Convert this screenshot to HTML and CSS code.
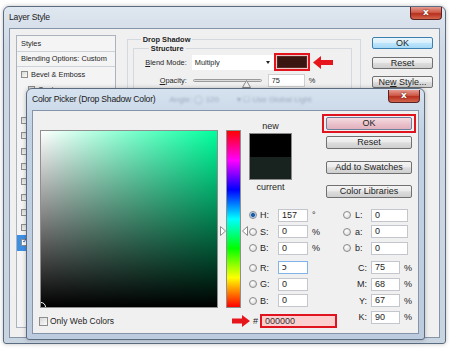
FILE: index.html
```html
<!DOCTYPE html>
<html lang="en">
<head>
  <meta charset="UTF-8">
  <title>Layer Style - Color Picker</title>
  <link rel="stylesheet" href="styles.css">
</head>
<body>
  <!-- Layer Style dialog (behind) -->
  <div class="win layer-style">
    <div class="titlebar">
      <span class="title">Layer Style</span>
      <span class="close">x</span>
    </div>
    <div class="client ls-client">
      <div class="styles-list">
        <div class="list-head">Styles</div>
        <div class="list-head">Blending Options: Custom</div>
        <div class="fx"><span class="cb"></span>Bevel &amp; Emboss</div>
        <div class="fx sub"><span class="cb"></span>Contour</div>
        <div class="fx sub"><span class="cb"></span>Texture</div>
        <div class="fx"><span class="cb"></span>Stroke</div>
        <div class="fx"><span class="cb"></span>Inner Shadow</div>
        <div class="fx"><span class="cb"></span>Inner Glow</div>
        <div class="fx"><span class="cb"></span>Satin</div>
        <div class="fx"><span class="cb"></span>Color Overlay</div>
        <div class="fx"><span class="cb"></span>Gradient Overlay</div>
        <div class="fx"><span class="cb"></span>Pattern Overlay</div>
        <div class="fx"><span class="cb"></span>Outer Glow</div>
        <div class="fx on"><span class="cb checked"></span>Drop Shadow</div>
      </div>

      <div class="settings">
        <fieldset class="group outer">
          <legend>Drop Shadow</legend>
          <fieldset class="group inner">
            <legend>Structure</legend>
            <div class="opt-row blend">
              <span class="opt-label"><u>B</u>lend Mode:</span>
              <span class="select">Multiply<span class="caret"></span></span>
              <span class="swatch"><span class="swatch-fill"></span></span>
              <svg class="red-arrow" width="20" height="13" viewBox="0 0 20 13">
                <polygon points="0,6.5 8,0 8,4 20,4 20,9 8,9 8,13" fill="#e8141c"/>
              </svg>
            </div>
            <div class="opt-row">
              <span class="opt-label"><u>O</u>pacity:</span>
              <span class="slider">
                <svg class="thumb" width="9" height="8" viewBox="0 0 9 8">
                  <polygon points="4.5,0.5 8.5,7.5 0.5,7.5" fill="#f4f4f4" stroke="#8a8a8a"/>
                </svg>
              </span>
              <span class="num">75</span>
              <span class="unit">%</span>
            </div>
          </fieldset>
        </fieldset>
      </div>

      <div class="side">
        <div class="btn default">OK</div>
        <div class="btn">Reset</div>
        <div class="btn">Ne<u>w</u> Style...</div>
      </div>
    </div>
  </div>

  <!-- Color Picker dialog (front) -->
  <div class="win picker">
    <div class="titlebar">
      <span class="title">Color Picker (Drop Shadow Color)</span>
      <span class="ghost g1">Angle: &#9711; 120</span>
      <span class="ghost g2">&#9662; &#9744; Use Global Light</span>
      <span class="close">x</span>
    </div>
    <div class="client pk-client">
      <div class="pk-left">
        <div class="field"><span class="marker"></span></div>
        <div class="web"><span class="cb"></span>Only Web Colors</div>
      </div>

      <div class="hue">
        <svg class="hue-arrow left" width="6" height="10" viewBox="0 0 6 10">
          <polygon points="0.5,0.5 5.5,5 0.5,9.5" fill="#fff" stroke="#8a8a8a"/>
        </svg>
        <svg class="hue-arrow right" width="6" height="10" viewBox="0 0 6 10">
          <polygon points="5.5,0.5 0.5,5 5.5,9.5" fill="#fff" stroke="#8a8a8a"/>
        </svg>
      </div>

      <div class="pk-right">
        <div class="pk-top">
          <div class="compare">
            <div class="cap">new</div>
            <div class="chip"><span class="chip-new"></span><span class="chip-cur"></span></div>
            <div class="cap">current</div>
          </div>
          <div class="pk-buttons">
            <div class="ok-frame"><div class="btn hot">OK</div></div>
            <div class="btn b-reset">Reset</div>
            <div class="btn b-add">Add to Swatches</div>
            <div class="btn b-libs">Color Libraries</div>
          </div>
        </div>

        <div class="fields">
          <div class="fcol hsb">
            <div class="frow"><span class="radio on"></span><span class="flabel">H:</span><span class="fin">157</span><span class="funit">°</span></div>
            <div class="frow"><span class="radio"></span><span class="flabel">S:</span><span class="fin">0</span><span class="funit">%</span></div>
            <div class="frow"><span class="radio"></span><span class="flabel">B:</span><span class="fin">0</span><span class="funit">%</span></div>
            <div class="fgap"></div>
            <div class="frow"><span class="radio"></span><span class="flabel">R:</span><span class="fin focus">כ</span></div>
            <div class="frow"><span class="radio"></span><span class="flabel">G:</span><span class="fin">0</span></div>
            <div class="frow"><span class="radio"></span><span class="flabel">B:</span><span class="fin">0</span></div>
            <div class="frow hex">
              <svg class="hex-arrow" width="18" height="12" viewBox="0 0 18 12">
                <polygon points="18,6 10,0 10,3.5 0,3.5 0,8.5 10,8.5 10,12" fill="#e8141c"/>
              </svg>
              <span class="hash">#</span>
              <span class="hexin">000000</span>
            </div>
          </div>
          <div class="fcol lab">
            <div class="frow"><span class="radio"></span><span class="flabel">L:</span><span class="fin">0</span></div>
            <div class="frow"><span class="radio"></span><span class="flabel">a:</span><span class="fin">0</span></div>
            <div class="frow"><span class="radio"></span><span class="flabel">b:</span><span class="fin">0</span></div>
            <div class="fgap"></div>
            <div class="frow cmyk"><span class="flabel">C:</span><span class="fin">75</span><span class="funit">%</span></div>
            <div class="frow cmyk"><span class="flabel">M:</span><span class="fin">68</span><span class="funit">%</span></div>
            <div class="frow cmyk"><span class="flabel">Y:</span><span class="fin">67</span><span class="funit">%</span></div>
            <div class="frow cmyk"><span class="flabel">K:</span><span class="fin">90</span><span class="funit">%</span></div>
          </div>
        </div>
      </div>
    </div>
  </div>
</body>
</html>
```

FILE: styles.css
```css
* {
  box-sizing: border-box;
}

body {
  margin: 0;
  width: 450px;
  height: 352px;
  position: relative;
  overflow: hidden;
  background: #fff;
  font-family: "Liberation Sans", Arial, sans-serif;
  color: #1e1e1e;
}

/* window frames */
.win {
  position: absolute;
  display: flex;
  flex-direction: column;
  border: 1px solid #5b6c80;
  border-radius: 6px 6px 3px 3px;
  padding: 0 5px 5px;
  background: linear-gradient(#d6e2ef, #c3d3e5 40px, #bccbde);
  box-shadow: 0 0 4px rgba(0, 0, 0, 0.25);
}

.layer-style {
  left: 3px;
  top: 6px;
  width: 443px;
  height: 338px;
  background: linear-gradient(#dfe7f0, #cfd9e5 40px, #c9d4e1);
}

.picker {
  left: 26px;
  top: 88px;
  width: 399px;
  height: 252px;
}

.titlebar {
  height: 21px;
  display: flex;
  align-items: flex-start;
}

.title {
  font-size: 8.6px;
  letter-spacing: -0.2px;
  line-height: 21px;
  color: #202020;
}

.close {
  margin-left: auto;
  margin-right: -2px;
  width: 32px;
  height: 13px;
  border: 1px solid #5a2222;
  border-top: none;
  border-radius: 0 0 4px 4px;
  background: linear-gradient(#e49b8f, #cf5a48 45%, #b8301f 55%, #d2664c);
  color: #fff;
  font: bold 9px/11px "DejaVu Sans", sans-serif;
  text-align: center;
  text-shadow: 0 0 2px #4a1010;
}

.picker .close {
  margin-top: 1px;
  margin-right: -1px;
}

.ghost {
  font-size: 8px;
  line-height: 21px;
  color: #6f7f95;
  opacity: 0.55;
  filter: blur(0.9px);
}

.g1 {
  margin-left: 14px;
}

.g2 {
  margin-left: 18px;
}

.client {
  flex: 1;
  display: flex;
  border: 1px solid #8495aa;
  background: #f0f0f0;
}

/* ---------- Layer Style ---------- */
.ls-client {
  padding: 6px 6px 0;
}

.styles-list {
  width: 100px;
  height: 293px;
  border: 1px solid #aab3be;
  background: #f4f4f4;
  font-size: 7.4px;
}

.list-head {
  height: 16px;
  line-height: 15px;
  padding-left: 4px;
  border-bottom: 1px solid #cdd2d8;
}

.list-head + .list-head {
  height: 15px;
  line-height: 14px;
}

.fx {
  height: 15.3px;
  display: flex;
  align-items: center;
  padding-left: 4px;
}

.fx.sub {
  padding-left: 11px;
}

.fx.on {
  background: #3d8fe4;
  color: #fff;
}

.cb {
  position: relative;
  width: 7px;
  height: 7px;
  margin-right: 3px;
  border: 1px solid #8e8e8e;
  background: linear-gradient(135deg, #d8d8d8, #fbfbfb);
}

.cb.checked {
  background: #fff;
}

.cb.checked::after {
  content: "\2713";
  position: absolute;
  left: 0;
  top: -3px;
  font-size: 7px;
  color: #1d4f96;
}

.settings {
  width: 235px;
  margin-left: 11px;
}

.group {
  margin: 0;
  min-width: 0;
  border: 1px solid #d3d9df;
}

.group legend {
  font-size: 7.4px;
  font-weight: bold;
  line-height: 9px;
  padding: 0 2px;
}

.group.outer {
  height: 290px;
  padding: 0 8px 0 5px;
}

.group.outer > legend {
  margin-left: 8px;
}

.group.inner {
  height: 200px;
  padding: 0 0 0 8px;
}

.group.inner > legend {
  margin-left: 7px;
}

.opt-row {
  height: 16px;
  display: flex;
  align-items: center;
  font-size: 7.4px;
  margin-top: 2px;
}

.opt-row.blend {
  margin-top: 1px;
}

.opt-label {
  width: 45px;
  text-align: right;
}

.select {
  position: relative;
  width: 82px;
  height: 15px;
  margin-left: 5px;
  padding-left: 3px;
  line-height: 15px;
  background: #fff;
}

.caret {
  position: absolute;
  right: 4px;
  top: 6px;
  border-left: 2.5px solid transparent;
  border-right: 2.5px solid transparent;
  border-top: 3px solid #222;
}

.swatch {
  width: 36px;
  height: 18px;
  padding: 1px;
  border: 2px solid #e3141c;
  background: #e9c8c8;
}

.swatch-fill {
  display: block;
  height: 100%;
  border: 1px solid #5c2a24;
  background: #3b1611;
}

.red-arrow {
  margin-left: 3px;
}

.slider {
  position: relative;
  width: 69px;
  height: 3px;
  margin-left: 6px;
  border: 1px solid #9a9a9a;
  border-radius: 2px;
  background: linear-gradient(#c9c9c9, #eeeeee);
}

.thumb {
  position: absolute;
  left: 48px;
  top: 0;
}

.num {
  width: 37px;
  height: 13px;
  margin-left: 6px;
  padding-left: 3px;
  line-height: 12px;
  background: #fff;
  border: 1px solid #d0d0d0;
}

.unit {
  margin-left: 4px;
}

.side {
  width: 61px;
  margin-left: 11px;
  padding-top: 2px;
  display: flex;
  flex-direction: column;
  gap: 7.5px;
}

.btn {
  height: 12px;
  border: 1px solid #707070;
  border-radius: 2px;
  background: linear-gradient(#f4f4f4, #ebebeb 45%, #dddddd 52%, #cfcfcf);
  font-size: 9px;
  line-height: 10px;
  text-align: center;
  white-space: nowrap;
}

.btn.default {
  border-color: #3c7fb1;
  background: linear-gradient(#eaf6fd, #d9f0fc 45%, #bee6fd 52%, #a7d9f5);
}

/* ---------- Color Picker ---------- */
.pk-client {
  padding: 3px 2px 0 7px;
}

.pk-left {
  width: 178px;
}

.field {
  position: relative;
  overflow: hidden;
  height: 178px;
  margin-top: 16px;
  border: 1px solid #8f8f8f;
  background: linear-gradient(to top, #000, rgba(0, 0, 0, 0)),
    linear-gradient(to right, #fff, #00ff9d);
}

.marker {
  position: absolute;
  left: -5px;
  bottom: -5px;
  width: 10px;
  height: 10px;
  border: 1px solid #fff;
  border-radius: 50%;
}

.web {
  display: flex;
  align-items: center;
  margin-top: 8px;
  font-size: 8.5px;
}

.web .cb {
  width: 9px;
  height: 9px;
  margin: 0 2px 0 -1px;
}

.hue {
  position: relative;
  width: 15px;
  height: 178px;
  margin: 16px 0 0 8px;
  border: 1px solid #8f8f8f;
  background: linear-gradient(#f00, #f0f 16.67%, #00f 33.33%, #0ff 50%, #0f0 66.67%, #ff0 83.33%, #f00);
}

.hue-arrow {
  position: absolute;
  top: 95px;
}

.hue-arrow.left {
  left: -7px;
}

.hue-arrow.right {
  right: -8px;
}

.pk-right {
  width: 167px;
  margin-left: 8px;
}

.pk-top {
  display: flex;
}

.compare {
  width: 43px;
  text-align: center;
  font-size: 9px;
}

.cap {
  height: 10px;
  line-height: 10px;
  margin-top: 7px;
}

.chip + .cap {
  margin-top: 2px;
}

.chip {
  display: flex;
  flex-direction: column;
  height: 47px;
  margin-top: 2px;
  border: 1px solid #8a8a8a;
}

.chip-new {
  flex: 1;
  background: #000;
}

.chip-cur {
  flex: 1;
  background: #18221e;
}

.pk-buttons {
  width: 94px;
  margin-left: auto;
}

.pk-buttons .btn {
  height: 13px;
  line-height: 11px;
  margin: 0 4px;
}

.ok-frame {
  padding: 1px 2px;
  border: 2px solid #e0141e;
}

.ok-frame .btn.hot {
  margin: 0;
  border-color: #6a7f9c;
  background: linear-gradient(#f6dbe1, #eac3cc 50%, #e2b1bd);
}

.pk-buttons .b-reset {
  margin-top: 3px;
}

.pk-buttons .b-add {
  margin-top: 12px;
}

.pk-buttons .b-libs {
  margin-top: 11px;
}

.fields {
  display: flex;
  margin-top: 9px;
  font-size: 9px;
}

.fcol.hsb {
  width: 94px;
}

.frow {
  position: relative;
  height: 16.5px;
  display: flex;
  align-items: center;
}

.fgap {
  height: 3px;
}

.radio {
  width: 8px;
  height: 8px;
  border-radius: 50%;
  border: 1px solid #8c8c8c;
  background: radial-gradient(circle at 40% 35%, #fff, #d2d2d2);
}

.radio.on {
  background: radial-gradient(circle, #1d5da6 0 1.6px, #8fbce8 2.2px, #eef5fc 3.5px);
}

.fin {
  height: 13px;
  padding-left: 3px;
  line-height: 11px;
  background: #fff;
  border: 1px solid #c3c6cc;
}

.fin.focus {
  border-color: #7eb4ea;
}

.funit {
  margin-left: 4px;
}

.hsb .flabel {
  width: 18px;
  margin-left: 3px;
}

.hsb .fin {
  width: 30px;
}

.lab .flabel {
  width: 16px;
  margin-left: 4px;
}

.lab .fin {
  width: 37px;
}

.lab .cmyk .flabel {
  width: 24px;
  margin: 0 4px 0 0;
  text-align: right;
}

.lab .cmyk .fin {
  width: 29px;
}

.frow.hex {
  margin-top: 4px;
}

.hex-arrow {
  position: absolute;
  left: -17px;
  top: 2px;
}

.hash {
  width: 11px;
  padding-left: 4px;
}

.hexin {
  width: 77px;
  height: 14px;
  padding-left: 3px;
  line-height: 10px;
  border: 2px solid #e0141e;
  background: #fdd0d0;
  color: #333;
}
```
